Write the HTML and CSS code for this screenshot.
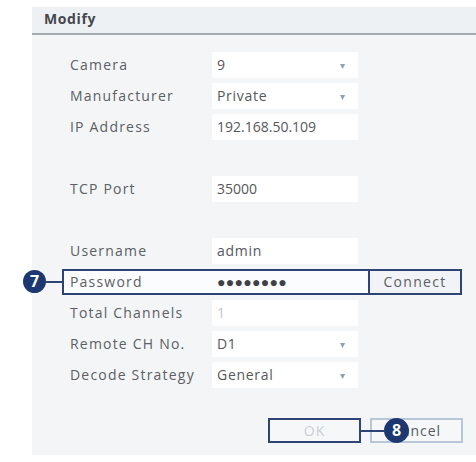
FILE: index.html
```html
<!DOCTYPE html>
<html lang="en">

<head>
    <meta charset="UTF-8">
    <meta name="viewport" content="width=device-width, initial-scale=1.0">
    <title>Modify</title>

    <link rel="stylesheet" href="styles.css">
</head>

<body>
    <div class="dialog">
        <div class="dialog-head">Modify</div>

        <div class="dialog-body">
            <div class="row">
                <span class="label">Camera</span>
                <span class="field select">9<i class="arrow">&#9662;</i></span>
            </div>
            <div class="row">
                <span class="label">Manufacturer</span>
                <span class="field select">Private<i class="arrow">&#9662;</i></span>
            </div>
            <div class="row">
                <span class="label">IP Address</span>
                <span class="field num">192.168.50.109</span>
            </div>
            <div class="row"></div>
            <div class="row">
                <span class="label">TCP Port</span>
                <span class="field num">35000</span>
            </div>
            <div class="row"></div>
            <div class="row">
                <span class="label">Username</span>
                <span class="field">admin</span>
            </div>

            <!-- 手順7: パスワード入力と接続 -->
            <div class="row">
                <div class="callout-box">
                    <span class="callout-num num-7">7</span>
                    <span class="label">Password</span>
                    <span class="field dots">&#9679;&#9679;&#9679;&#9679;&#9679;&#9679;&#9679;&#9679;</span>
                    <span class="connect">Connect</span>
                </div>
            </div>

            <div class="row">
                <span class="label">Total Channels</span>
                <span class="field disabled">1</span>
            </div>
            <div class="row">
                <span class="label">Remote CH No.</span>
                <span class="field select">D1<i class="arrow">&#9662;</i></span>
            </div>
            <div class="row">
                <span class="label">Decode Strategy</span>
                <span class="field select">General<i class="arrow">&#9662;</i></span>
            </div>
        </div>

        <!-- 手順8: OK -->
        <div class="dialog-foot">
            <span class="btn btn-ok">OK<span class="callout-num num-8">8</span></span>
            <span class="btn btn-cancel">Cancel</span>
        </div>
    </div>
</body>

</html>
```

FILE: styles.css
```css
    body {
        margin: 0;
        background-color: #ffffff;
        font-family: 'Open Sans', 'Noto Sans', sans-serif;
        color: #5a5d61;
    }

    .dialog {
        margin: 7px 0 0 32px;
        height: 448px;
        background-color: #f3f5f7;
    }

    .dialog-head {
        height: 26px;
        line-height: 24px;
        padding-left: 12px;
        background-color: #eef1f4;
        border-bottom: 2px solid #a7abb0;
        font-size: 14px;
        font-weight: 700;
        letter-spacing: 0.6px;
        color: #45484c;
    }

    .dialog-body {
        padding: 14px 0 0 38px;
    }

    .row {
        display: flex;
        align-items: center;
        height: 31px;
    }

    .label {
        width: 142px;
        font-size: 14px;
        letter-spacing: 1.2px;
        color: #5c5f63;
        white-space: nowrap;
    }

    .field {
        position: relative;
        box-sizing: border-box;
        width: 146px;
        height: 26px;
        line-height: 26px;
        padding-left: 5px;
        background-color: #ffffff;
        font-size: 14px;
        letter-spacing: 0.7px;
        color: #55585c;
    }

    .field.num {
        letter-spacing: 0;
    }

    .field .arrow {
        position: absolute;
        right: 12px;
        top: 0;
        font-style: normal;
        font-size: 10px;
        color: #8c9fbb;
    }

    .field.disabled {
        color: #c3c7cc;
    }

    .field.dots {
        font-size: 14px;
        letter-spacing: 0.3px;
        color: #3e4145;
        background-color: transparent;
    }

    /* 手順の枠 */
    .callout-box {
        position: relative;
        display: flex;
        align-items: center;
        box-sizing: border-box;
        height: 26px;
        width: 400px;
        margin-left: -8px;
        padding-left: 6px;
        border: 2px solid #2e4474;
        background-color: #fbfcfd;
    }

    .callout-box .field {
        height: 22px;
        line-height: 22px;
    }

    .connect {
        box-sizing: border-box;
        height: 22px;
        line-height: 22px;
        margin-left: auto;
        width: 92px;
        border-left: 2px solid #2e4474;
        text-align: center;
        font-size: 14px;
        letter-spacing: 1.3px;
        color: #5c5f63;
        background-color: #f1f3f6;
    }

    .callout-num {
        position: absolute;
        z-index: 2;
        width: 23px;
        height: 23px;
        line-height: 23px;
        border-radius: 50%;
        background-color: #1d3770;
        color: #ffffff;
        font-family: 'Noto Sans', sans-serif;
        font-weight: 700;
        font-size: 16px;
        letter-spacing: 0;
        text-align: center;
    }

    .callout-num::before {
        content: '';
        position: absolute;
        top: 11px;
        height: 2px;
        background-color: #2e4474;
    }

    .num-7 {
        left: -41px;
        top: -1px;
    }

    .num-7::before {
        left: 23px;
        width: 16px;
    }

    .dialog-foot {
        display: flex;
        justify-content: flex-end;
        gap: 9px;
        padding: 28px 13px 0 0;
    }

    .btn {
        position: relative;
        box-sizing: border-box;
        width: 93px;
        height: 25px;
        line-height: 21px;
        text-align: center;
        font-size: 14px;
        letter-spacing: 1px;
        background-color: #f5f7f9;
    }

    .btn-ok {
        z-index: 2;
        border: 2px solid #2e4474;
        color: #c9ced5;
    }

    .btn-cancel {
        border: 2px solid #b9c6d7;
        color: #55585c;
    }

    .num-8 {
        left: 114px;
        top: -2px;
        width: 25px;
        height: 25px;
        line-height: 25px;
    }

    .num-8::before {
        left: -23px;
        top: 12px;
        width: 23px;
    }
```
